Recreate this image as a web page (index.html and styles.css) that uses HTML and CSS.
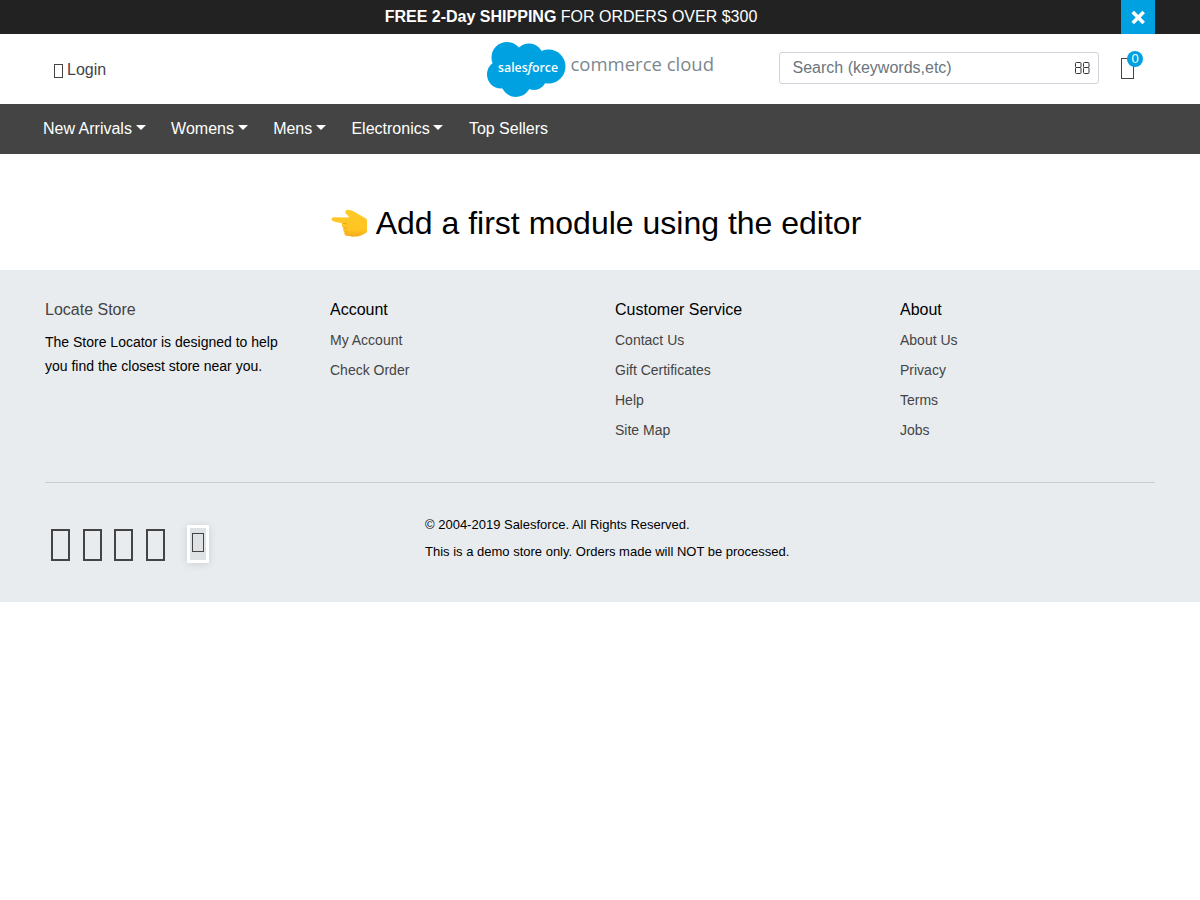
FILE: index.html
```html
<!DOCTYPE html>
<html lang="en">
<head>
<meta charset="utf-8">
<title>Salesforce Commerce Cloud</title>
<link rel="stylesheet" href="styles.css">
</head>
<body>
<div class="banner">
  <p class="promo"><strong>FREE 2-Day SHIPPING</strong> FOR ORDERS OVER $300</p>
  <button class="close" aria-label="Close"><svg width="34" height="34" viewBox="0 0 34 34"><path d="M13 13.300l8.400 8.400M21.400 13.300l-8.400 8.400" stroke="#fff" stroke-width="3.600" stroke-linecap="square"/></svg></button>
</div>
<header class="header">
  <a class="login"><span class="glyph glyph-user"></span>Login</a>
  <svg class="logo" width="230" height="60" viewBox="0 0 230 60">
    <g fill="#00a1e0"><circle cx="21" cy="17.500" r="15.500"/><circle cx="43" cy="17.500" r="14"/><circle cx="62.500" cy="26.500" r="17"/><circle cx="15" cy="34.500" r="14"/><circle cx="30" cy="42" r="15"/><circle cx="48" cy="37.500" r="12.500"/><path d="M13 20h48v18H19z"/></g>
    <text x="12" y="31.500" class="brand" textLength="60" lengthAdjust="spacingAndGlyphs">sales<tspan font-style="italic">f</tspan>orce</text>
    <text x="84.500" y="31" class="product" textLength="143.500" lengthAdjust="spacingAndGlyphs">commerce cloud</text>
  </svg>
  <div class="search"><span>Search (keywords,etc)</span>
    <svg width="16" height="14" viewBox="0 0 16 14" fill="none" stroke="#333" stroke-width="1"><rect x=".5" y="1.500" width="5.500" height="5" rx="1"/><rect x=".5" y="6.500" width="5.500" height="6" rx="1"/><rect x="8.500" y="1.500" width="5.500" height="5" rx="1"/><rect x="8.500" y="6.500" width="5.500" height="6" rx="1"/></svg>
  </div>
  <a class="cart"><span class="glyph glyph-cart"></span><span class="count">0</span></a>
</header>
<nav class="nav">
  <a class="drop">New Arrivals</a><a class="drop">Womens</a><a class="drop">Mens</a><a class="drop">Electronics</a><a>Top Sellers</a>
</nav>
<main class="main"><h1><svg class="hand" width="37" height="29" viewBox="0 0 37 29"><defs><linearGradient id="skin" x1="0" y1="0" x2="0" y2="1"><stop offset="0" stop-color="#ffca28"/><stop offset=".75" stop-color="#ffc422"/><stop offset="1" stop-color="#f5a91b"/></linearGradient></defs><path d="M2.500 8.200L17.500 8.500C18 7.500 17.500 6.500 15.500 5.500C13.500 4 14 .8 17 .8C21 1 25 3.600 28 5.500L35 9.500C35.700 10 36 11 36 12V22C36 23 35.500 23.500 34.800 24L30 26.500C26 28 19 28 15.500 26.800C13.500 26 13 24.500 13.600 23C12 22 11.600 20.500 12.600 19C10.800 18 10.200 16 11.500 14.500L3 12.600C-.2 12-.2 8.400 2.500 8.200Z" fill="url(#skin)"/><path d="M11.500 14.500h4M12.600 19h3.500M13.600 23h3" fill="none" stroke="#eba11a" stroke-width="1"/></svg>Add a first module using the editor</h1></main>
<footer class="footer">
  <div class="columns">
    <section><h2 class="store">Locate Store</h2><p>The Store Locator is designed to help you find the closest store near you.</p></section>
    <section><h2>Account</h2><ul><li>My Account</li><li>Check Order</li></ul></section>
    <section><h2>Customer Service</h2><ul><li>Contact Us</li><li>Gift Certificates</li><li>Help</li><li>Site Map</li></ul></section>
    <section><h2>About</h2><ul><li>About Us</li><li>Privacy</li><li>Terms</li><li>Jobs</li></ul></section>
  </div>
  <div class="bottom">
    <div class="social"><span class="glyph"></span><span class="glyph"></span><span class="glyph"></span><span class="glyph"></span><span class="boxed"><span class="glyph"></span></span></div>
    <div class="legal"><div>© 2004-2019 Salesforce. All Rights Reserved.</div><div>This is a demo store only. Orders made will NOT be processed.</div></div>
  </div>
</footer>
</body>
</html>
```
FILE: styles.css
```css
* { box-sizing: border-box; }
body { margin: 0; font: 16px/24px "Liberation Sans", Arial, sans-serif; color: #000; background: #fff; }
h1, h2, p, ul { margin: 0; padding: 0; font-weight: 400; }
ul { list-style: none; }
.banner { height: 34px; padding: 0 45px; background: #222; color: #fff; display: flex; }
.promo { flex: 1; margin-right: -34px; padding: 5px 74px 0 16px; text-align: center; }
.close { width: 34px; height: 34px; margin: 0; padding: 0; border: 0; background: #00a1e0; display: block; }
.close svg { display: block; }
.header { height: 70px; padding: 0 45px 0 53px; display: flex; align-items: flex-start; color: #444; }
.glyph { display: block; flex: none; border: 1px solid #444; }
.login { width: 433px; padding: 24px 0 0 1px; display: flex; }
.glyph-user { width: 9px; height: 14px; margin: 6px 4px 0 0; }
.logo { margin-top: 6px; flex: none; overflow: visible; }
.brand { font: 600 13px "Open Sans", sans-serif; fill: #fff; }
.product { font: 19px "Open Sans", sans-serif; fill: #7c8790; }
.search { width: 320px; height: 32px; margin: 18px 0 0 63px; padding: 0 7px 0 12.5px; border: 1px solid #ced4da; border-radius: 3px; display: flex; align-items: center; justify-content: space-between; color: #6c757d; }
.cart { position: relative; margin: 24px 0 0 22px; }
.glyph-cart { width: 13px; height: 21px; }
.count { position: absolute; left: 6px; top: -7px; width: 16px; height: 16px; border-radius: 50%; background: #00a1e0; color: #fff; font-size: 13px; line-height: 16px; text-align: center; }
.nav { height: 50px; padding: 13px 43px 0; background: #444; color: #fff; display: flex; gap: 25.4px; }
.drop::after { content: ""; display: inline-block; margin-left: 3.8px; vertical-align: 4px; border-top: 5px solid; border-left: 5px solid transparent; border-right: 5px solid transparent; }
.main { height: 116px; padding-top: 45px; text-align: center; }
.main h1 { font-size: 32px; line-height: 48px; padding-right: 8px; }
.hand { margin-right: 8px; vertical-align: -4px; }
.footer { height: 332px; padding: 28px 45px 0; background: #e8ecef; }
.columns { height: 185px; display: grid; grid-template-columns: repeat(4, 285px); border-bottom: 1px solid #c9cccf; }
.columns h2 { font-size: 16px; line-height: 24px; }
.columns .store { color: #444; }
.columns p { margin-top: 8px; width: 255px; font-size: 14px; line-height: 24px; }
.columns ul { margin-top: 3px; color: #444; font-size: 14px; line-height: 30px; }
.bottom { display: flex; }
.social { width: 380px; display: flex; align-items: flex-start; padding: 42px 0 0 6px; }
.social > .glyph { width: 19px; height: 32px; margin: 4px 12.67px 0 0; border-width: 2px; }
.boxed { width: 22px; height: 38px; margin-left: 9px; padding: 5px 0 0 2px; border: 3px solid #fff; background: #dfe2e5; box-shadow: 0 1px 8px rgba(0,0,0,.12); }
.boxed .glyph { width: 12px; height: 19px; }
.legal { padding-top: 28px; font-size: 13px; line-height: 27px; }
```
